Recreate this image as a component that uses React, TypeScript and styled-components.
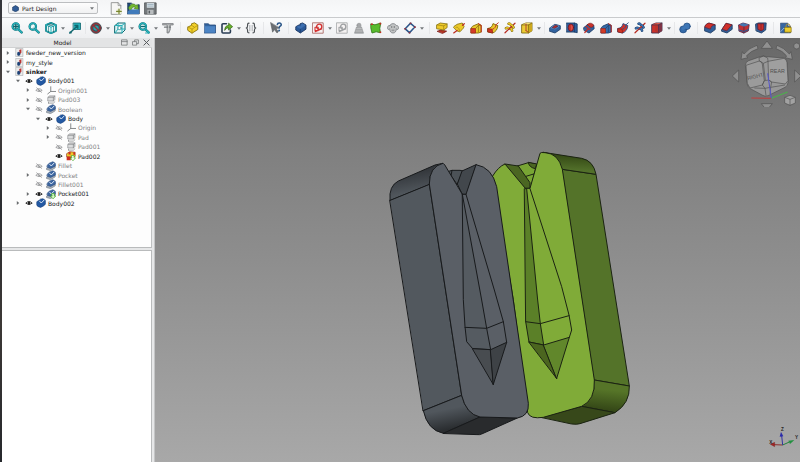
import React from "react";
import styled, { createGlobalStyle } from "styled-components";

const GlobalStyle = createGlobalStyle`
  * { box-sizing: border-box; }
  html, body, #root { height: 100%; }
  body { margin: 0; overflow: hidden; font-family: "DejaVu Sans", sans-serif; font-size: 6px; color: #1f2123; }
  button, select { font: inherit; color: inherit; border: 0; padding: 0; margin: 0; background: none; }
  svg { display: block; }
`;

const Shell = styled.div`
  height: 100vh;
  display: grid;
  grid-template-columns: 2px minmax(0, 1fr);
`;
const DesktopEdge = styled.div`
  background: linear-gradient(#33353a, #4a4340 20%, #2b2d31 45%, #3c3836 70%, #26282c);
`;
const Window = styled.div`
  display: flex;
  flex-direction: column;
  min-height: 0;
  background: #eff0f1;
`;
const TopBar = styled.div`
  display: flex;
  align-items: center;
  height: 18px;
  padding: 0 6px 1px;
  gap: 10px;
  background: linear-gradient(#f4f5f6, #fafbfc);
  border-bottom: 1px solid #c9cbcd;
`;
const WorkbenchBox = styled.label`
  display: flex;
  align-items: center;
  width: 90px;
  height: 12px;
  padding: 0 3px;
  gap: 3px;
  background: linear-gradient(#fdfdfd, #f0f1f2);
  border: 1px solid #bcbec0;
  border-radius: 2px;
`;
const WorkbenchSelect = styled.select`
  appearance: none;
  flex: 1;
  min-width: 0;
  height: 10px;
  outline: 0;
`;
const ToolBar = styled.div`
  display: flex;
  align-items: center;
  height: 20px;
  padding-left: 6px;
  overflow: hidden;
  background: linear-gradient(#fafbfc, #eeeff1);
`;
const ToolButton = styled.button`
  display: flex;
  flex: none;
  align-items: center;
  justify-content: center;
  width: 17px;
  height: 17px;
`;
const CaretButton = styled.button`
  display: flex;
  flex: none;
  align-items: center;
  justify-content: center;
  width: 7px;
  height: 17px;
`;
const Separator = styled.span<{ $wide?: boolean }>`
  flex: none;
  display: flex;
  justify-content: center;
  width: ${(p) => (p.$wide ? 8 : 4)}px;
  height: 12px;
  &::after { content: ""; width: 1px; background: #e6e7e9; }
`;
const FileTools = styled.div`
  display: flex;
`;
const Workspace = styled.div`
  flex: 1;
  min-height: 0;
  display: grid;
  grid-template-columns: 153px minmax(0, 1fr);
`;
const Dock = styled.aside`
  display: flex;
  flex-direction: column;
  min-height: 0;
  padding-right: 2px;
  background: #e6e7e8;
  border-right: 1px solid #c4c5c6;
`;
const DockHeader = styled.header`
  display: flex;
  align-items: center;
  height: 10px;
  background: #e3e4e5;
  border-bottom: 1px solid #d0d1d2;
`;
const DockTitle = styled.h1`
  flex: 1;
  margin: 0;
  padding-left: 4px;
  font-size: 6px;
  line-height: 8px;
  font-weight: 400;
  text-align: center;
`;
const DockButton = styled.button`
  display: flex;
  align-items: center;
  justify-content: center;
  width: 11px;
  height: 9px;
`;
const TreePanel = styled.div`
  flex: none;
  height: 200px;
  background: #fdfdfd;
  border-right: 1px solid #bfc1c2;
  border-bottom: 1px solid #b9bbbc;
`;
const PropertyPanel = styled.div`
  flex: 1;
  min-height: 0;
  margin-top: 2px;
  background: #fff;
  border: 1px solid #b9bbbc;
  border-left: 0;
  border-bottom: 0;
`;
const Tree = styled.ul`
  display: grid;
  grid-auto-rows: 1fr;
  height: 160px;
  margin: 0;
  padding: 0;
  list-style: none;
`;
const Row = styled.li<{ $level: number; $dim?: boolean; $bold?: boolean }>`
  display: flex;
  align-items: center;
  min-height: 0;
  padding-left: ${(p) => p.$level * 10}px;
  line-height: 9px;
  white-space: nowrap;
  color: ${(p) => (p.$dim ? "#7f8183" : "#17191b")};
  font-weight: ${(p) => (p.$bold ? 700 : 400)};
`;
const Cell = styled.span<{ $first?: boolean }>`
  display: flex;
  flex: none;
  align-items: center;
  justify-content: center;
  width: ${(p) => (p.$first ? 11 : 12)}px;
`;
const RowToggle = styled.button`
  display: flex;
  padding: 1px;
`;
const Label = styled.span`
  padding-left: 1px;
`;
const Viewport = styled.main`
  position: relative;
  min-width: 0;
  min-height: 0;
  overflow: hidden;
  background: linear-gradient(#686868, #808080 27%, #929292 60%, #a8a8a8);
`;
const Scene = styled.svg`
  width: 100%;
  height: 100%;
`;
const CubeOverlay = styled.svg`
  position: absolute;
  top: 0;
  right: 0;
`;
const AxisOverlay = styled.svg`
  position: absolute;
  right: 0;
  bottom: 0;
`;

const Ico = ({ children, size = 12 }: { children: React.ReactNode; size?: number }) => (
  <svg width={size} height={size} viewBox="0 0 12 12" strokeLinejoin="round" strokeLinecap="round" aria-hidden="true">
    {children}
  </svg>
);

const TEAL = "#25b2bb";
const TEAL_D = "#0f666e";

const Magnifier = ({ children }: { children?: React.ReactNode }) => (
  <Ico>
    <path d="M7 7 10.6 10.4" stroke={TEAL_D} strokeWidth="2.4" />
    <path d="M7 7 10.6 10.4" stroke={TEAL} strokeWidth="1.6" />
    <circle cx="4.8" cy="4.5" r="3.3" fill="#bfe6e8" stroke={TEAL_D} strokeWidth="2" />
    <circle cx="4.8" cy="4.5" r="3.3" fill="none" stroke={TEAL} strokeWidth="1.3" />
    {children}
  </Ico>
);
const FitAll = () => (
  <Magnifier>
    <path d="M4.8 2.4v4.2M2.7 4.5h4.2" stroke={TEAL_D} strokeWidth="1.3" />
  </Magnifier>
);
const FitSelection = () => (
  <Magnifier>
    <path d="M3.5 5.5 5.6 3.2" stroke="#fff" strokeWidth="1.4" />
  </Magnifier>
);
const ViewZoom = () => (
  <Magnifier>
    <path d="M3 4.5h3.6" stroke={TEAL_D} strokeWidth="1.2" />
    <path d="M7.5 11h3.5" stroke={TEAL} />
  </Magnifier>
);
const IsoView = () => (
  <Ico>
    <path d="M6 .8 11 3v6L6 11.3 1 9V3Z" fill="#e9f7f7" stroke={TEAL_D} strokeWidth="1.7" />
    <path d="M1 3 6 5.200 11 3M6 5.200v6M6 .8 11 3v6L6 11.300 1 9V3Z" fill="none" stroke={TEAL} />
    <path d="M3.500 2 8.500 4.200V10M8.500 2 3.500 4.200V10" fill="none" stroke={TEAL_D} strokeWidth=".6" />
  </Ico>
);
const AlignView = () => (
  <Ico>
    <path d="M4.5 1h7v6.5h-7Z" fill={TEAL} stroke={TEAL_D} strokeWidth=".8" />
    <path d="M.8 11 5 7M3 9 8.5 3.8M6 3.5h2.8v2.8" stroke={TEAL_D} strokeWidth="1.3" fill="none" />
    <path d="M.5 9.6h2.2v1.8H.5Z" fill={TEAL_D} />
  </Ico>
);
const DrawStyle = () => (
  <Ico>
    <circle cx="6" cy="6" r="5.2" fill="#4c5a63" />
    <path d="M3.2 4.2 6 3l3 1.2v3.6L6 9.2 3.2 7.8Z" fill="#2aa2aa" stroke="#274d54" strokeWidth=".8" />
    <circle cx="6" cy="6" r="4.4" fill="none" stroke="#a42b31" strokeWidth="1.3" />
    <path d="m3 3 6 6" stroke="#a42b31" strokeWidth="1.4" />
    <circle cx="6" cy="6" r="5.4" fill="none" stroke="#3a474e" strokeWidth=".8" />
  </Ico>
);
const BoxView = () => (
  <Ico>
    <path d="M1 3.5 4 1h7v7l-3 3H1Z" fill="#dff3f4" stroke={TEAL_D} />
    <path d="M1 3.5h7V11M8 3.5 11 1M4 1v6h7M4 7l-3 4" fill="none" stroke={TEAL} />
    <circle cx="5.5" cy="6" r="1.6" fill="#fff" stroke={TEAL_D} strokeWidth=".5" />
  </Ico>
);
const Measure = () => (
  <Ico>
    <path d="M.8 1.5h10.400v1.500H8.300V7.500L6.800 11H5V3H.8Z" fill="#a9acae" stroke="#75797c" strokeWidth=".7" />
    <path d="M2.500 5.200h6" stroke="#75797c" strokeWidth="1.200" />
    <path d="M6.500 3.500v5" stroke="#dfe0e1" strokeWidth=".6" />
  </Ico>
);
const YellowPart = () => (
  <Ico>
    <path d="M1 5 4.5 3.3V1.8L7.5.8l3.300 2.200v4.500L5 11.200 1 8.500Z" fill="#f2d02a" stroke="#8a730b" strokeWidth=".9" />
    <path d="M1 5 5 7.200l5.800-4M5 7.200v4M4.500 3.300 7 4.800" fill="none" stroke="#b0930f" strokeWidth=".8" />
  </Ico>
);
const Folder = () => (
  <Ico>
    <path d="M.5 1.8h4l1 1.2h6v8H.5Z" fill="#34659f" stroke="#23497b" strokeWidth=".8" />
    <path d="M.8 4.2h10.4v6.5H.8Z" fill="#4c84c4" />
  </Ico>
);
const LinkIcon = () => (
  <Ico>
    <path d="M5.5 1.8H2A1 1 0 0 0 1 2.8V10a1 1 0 0 0 1 1h6.4a1 1 0 0 0 1-1V8" fill="none" stroke="#2a3d54" strokeWidth="1.6" />
    <path d="M3.800 8c0-3 1.200-4.400 3.800-4.500V1.200l4 3.500-4 3.300V5.900C6 5.900 4.800 6.500 3.800 8Z" fill="#69b22b" stroke="#2d5c10" strokeWidth=".7" />
  </Ico>
);
const Expression = () => (
  <Ico>
    <path d="M4 1.2C2.5 1.2 2.6 2 2.6 3.4 2.6 5 2.3 5.8 1.2 6c1.1.2 1.4 1 1.4 2.6 0 1.4-.1 2.2 1.4 2.2M8 1.2c1.5 0 1.4.8 1.4 2.2 0 1.6.3 2.4 1.4 2.6-1.1.2-1.4 1-1.4 2.6 0 1.4.1 2.2-1.4 2.2" fill="none" stroke="#4b5054" strokeWidth="1.2" />
    <path d="M4.8 3.4v5.4M7.2 3.4v5.4" stroke="#7b8084" strokeWidth=".6" />
  </Ico>
);
const WhatsThis = () => (
  <Ico>
    <path d="m.6.8 2 9.4 1.8-2.6 2.6 3.4 1.4-1.2-2.3-3.2 3.1-.6Z" fill="#6b6f73" stroke="#4b4f53" strokeWidth=".5" />
    <path d="M7.4 2.4C7.6.4 11.4.5 11.2 2.8 11 4.4 9.2 4 9.1 6" fill="none" stroke="#2c5788" strokeWidth="1.6" />
    <circle cx="9.1" cy="8.6" r="1" fill="#2c5788" />
  </Ico>
);
const BodyIcon = () => (
  <Ico>
    <path d="M1 4.6 4.2 2.8 5 3.4V1.800L7.600.9 11 3v4.200L5.400 11 1 8.200Z" fill="#2b5997" stroke="#14305c" strokeWidth=".8" />
    <path d="M1.4 4.8 5.3 7l5.300-3.700L7.600 1.600 5.600 2.400v2.200L4.100 3.500Z" fill="#3d6fb0" />
    <path d="M5.300 7.200v3.500" stroke="#14305c" strokeWidth=".6" />
  </Ico>
);
const Sketch = ({ color = "#d33131", frame = "#ab6b68" }: { color?: string; frame?: string }) => (
  <Ico>
    <path d="M.8.8h10.4v10.4H.8Z" fill="#f5f2f2" stroke={frame} strokeWidth=".9" />
    <circle cx="7.2" cy="4.8" r="2.6" fill="none" stroke={color} strokeWidth="1.3" />
    <path d="M3 5.2h3.2v3.4H3ZM3.2 9.8 9.4 7" fill="none" stroke={color} strokeWidth="1.1" />
  </Ico>
);
const Weight = () => (
  <Ico>
    <path d="M4 3.2a2 2 0 1 1 4 0c0 1-.4 1.2-.5 1.8h1l2 6.2h-9l2-6.2h1C4.4 4.4 4 4.2 4 3.2Z" fill="#a6a8aa" stroke="#8c8f91" strokeWidth=".6" />
    <path d="M3.8 6.5h4.6M3 9h6" stroke="#c4c6c7" strokeWidth=".7" />
  </Ico>
);
const GreenShape = () => (
  <Ico>
    <path d="m1 2 4 .8L10.8 1 9.8 6.4l.6 4.4-4.2-1L2 11 .9 6.4Z" fill="#58bb2d" stroke="#2c7414" strokeWidth=".8" />
    <path d="M1 1.5h1.8v1.6H1ZM9.4.8h1.8v1.7H9.4ZM9.600 9.400h1.600V11H9.600Z" fill="#c62a20" />
  </Ico>
);
const Clone = () => (
  <Ico>
    <path d="M2.800 3.500C4 1 8 1 9.200 3.500c2-.2 2.600 1.500 2.200 3.200-.3 1-1.500 1-2 0C9.200 9.500 8 11 6 11S2.800 9.500 2.600 6.700c-.5 1-1.700 1-2 0-.4-1.700.2-3.400 2.200-3.200Z" fill="#c2c4c5" stroke="#85888b" strokeWidth=".9" />
    <circle cx="4.700" cy="5" r=".7" fill="#66696b" />
    <circle cx="7.300" cy="5" r=".7" fill="#66696b" />
    <path d="M5 8.200h2" stroke="#77797b" strokeWidth=".8" />
  </Ico>
);
const Datum = () => (
  <Ico>
    <path d="M6.500 1.300 10.800 5 5.500 10.700 1.200 6.800Z" fill="#f5f7f9" stroke="#2d568a" strokeWidth="1.600" />
    <path d="M5.700.4h1.700v1.700H5.700ZM10 4.200h1.700v1.700H10ZM4.700 9.900h1.700v1.700H4.700ZM.3 5.900H2v1.700H.3Z" fill="#8c3140" />
  </Ico>
);
const PadTool = () => (
  <Ico>
    <path d="M1.5 9.2 5 8l5.6 1.2-3.800 2.100Z" fill="#b43424" stroke="#7b1712" strokeWidth=".8" />
    <path d="M.9 2.9 4.2 1l6.900.9v3.700L7.700 8 .9 6.800Z" fill="#edc92a" stroke="#84700d" strokeWidth=".8" />
    <path d="m.9 2.9 6.800 1 3.400-2M7.700 3.9V8" fill="none" stroke="#9d8410" strokeWidth=".7" />
  </Ico>
);
const RevolveTool = () => (
  <Ico>
    <path d="M.6 5.2C1 3.500 3 3.600 4 2.300L9.200 1l1.900 3.300C10.500 7 8 8.500 6.800 9.800L4.200 9Z" fill="#ecc92a" stroke="#84700d" strokeWidth=".8" />
    <path d="M2.800 5.500c1.600-1 3.200 0 3.800 3.500" fill="none" stroke="#a58b13" strokeWidth=".7" />
    <path d="M.7 10.900 4 8.400M9.500 3.300 11.300 1.700" stroke="#bd2b21" strokeWidth="1.200" />
  </Ico>
);
const LoftTool = ({ a, b }: { a: string; b: string }) => (
  <Ico>
    <path d="M3 4 8.400 1.700l2.800 1.700V10l-2.900 1H1.100V6.600Z" fill={a} stroke={b} strokeWidth=".9" />
    <path d="M1.100 6.600h4.400V11H1.100Z" fill="#d43c27" stroke="#a02117" strokeWidth=".7" />
    <path d="m5.500 6.600 2.900-3.200h2.700M8.400 3.400V10" fill="none" stroke={b} strokeWidth=".7" />
    <path d="m8.400 1.700 2.800 1.700V10" fill="none" stroke="#c32a20" />
  </Ico>
);
const SweepTool = ({ a, b, line }: { a: string; b: string; line: string }) => (
  <Ico>
    <path d="M1 6.500C4.300 6 5.300 4.300 6 1.600l4.800 2C10.600 7.500 8.500 10 5.600 11L1 10Z" fill={a} stroke={b} strokeWidth=".9" />
    <path d="m1 6.600 4.200.7.400 3.700L1 10Z" fill="#cf3526" stroke="#8f1b14" strokeWidth=".7" />
    <path d="M5.600 7.200C8 6.500 8.700 4.500 9 2.800L11.300.8" fill="none" stroke={line} strokeWidth=".9" />
  </Ico>
);
const HelixTool = ({ a, b }: { a: string; b: string }) => (
  <Ico>
    <path d="M1 10.800 11 1.200" stroke="#b72a20" strokeWidth="1.200" />
    <path d="M4.600 1.700C7 1.200 6.400 3.600 8.500 3.800L9.500 5.400M2 6.300C4 4.700 4.300 7 7.300 6.600l.7 2" fill="none" stroke={b} strokeWidth="2.600" />
    <path d="M4.600 1.700C7 1.200 6.400 3.600 8.500 3.800L9.500 5.400M2 6.300C4 4.700 4.300 7 7.300 6.600l.7 2" fill="none" stroke={a} strokeWidth="1.600" />
    <path d="M4.600 7.400 7.600 4.500" stroke="#b72a20" strokeWidth="1.100" />
  </Ico>
);
const CubeTool = ({ front, top, side, edge }: { front: string; top: string; side: string; edge: string }) => (
  <Ico>
    <path d="M1 2.600 5 1h6v7.800L7.400 11H1Z" fill={front} stroke={edge} strokeWidth=".9" />
    <path d="M1 2.800 4.800 1H11L7.400 2.900Z" fill={top} />
    <path d="M7.400 2.900 11 1v7.800L7.400 11Z" fill={side} />
    <path d="M1 2.900h6.400L11 1M7.400 2.900V11" fill="none" stroke={edge} strokeWidth=".8" />
    <path d="M5 2v6.700M5 8.700 7 10" stroke="#a9352b" strokeWidth=".9" />
  </Ico>
);
const PocketTool = () => (
  <Ico>
    <path d="M.7 6 5.800 2.300l5.500 1.400v3.600L6 11 .7 9.300Z" fill="#31629f" stroke="#183962" strokeWidth=".8" />
    <path d="M.9 6 5.800 2.500l5.300 1.300L6 7.600Z" fill="#5b8ac0" />
    <path d="m3.600 5.400 2.600-2 2.700.7-2.700 2Z" fill="#bd2d28" stroke="#6b1a2a" strokeWidth=".7" />
  </Ico>
);
const HoleTool = () => (
  <Ico>
    <path d="M.6 1h7.800l2.800.9v8.800l-3-.6H.6Z" fill="#2f5f9d" stroke="#173760" strokeWidth=".8" />
    <path d="M8.400 1v9.100" stroke="#173760" strokeWidth=".7" />
    <ellipse cx="4.900" cy="5.600" rx="2.700" ry="3.600" fill="#c32e29" stroke="#63172a" strokeWidth=".8" />
    <path d="M4.800 2.500c2.600 1 2.600 5 0 6.300Z" fill="#dc5248" />
  </Ico>
);
const GrooveTool = () => (
  <Ico>
    <path d="M.8 5.500 4.800 2.600l5.900.7.500 3.400L6 11 1.300 8.600Z" fill="#31629f" stroke="#183962" strokeWidth=".8" />
    <path d="M4.400 2.500C6.500.2 9.700 1 10.700 3.400 9 6.500 6.600 5.800 4.400 2.500Z" fill="#ca332c" stroke="#74191e" strokeWidth=".6" />
    <path d="M1.800 10.500 5 7M3 4.600l4 3" stroke="#c22d28" strokeWidth="1.200" />
  </Ico>
);
const Blob = () => (
  <Ico>
    <circle cx="4.200" cy="7.400" r="3.500" fill="#356ba9" stroke="#20497c" strokeWidth=".7" />
    <circle cx="8" cy="4.300" r="3.300" fill="#3e76b5" stroke="#20497c" strokeWidth=".7" />
    <path d="M4 6.500 7.500 4" stroke="#3e76b5" strokeWidth="3" />
  </Ico>
);
const DressTool = ({ kind }: { kind: "fillet" | "chamfer" | "draft" | "thick" }) => (
  <Ico>
    {kind === "fillet" && (
      <>
        <path d="M.8 4.800C1.500 2.500 3 1.500 5 1.100l6.200 1.700v4.800L6.500 11 .8 9Z" fill="#315f99" stroke="#17355c" strokeWidth=".8" />
        <path d="M.8 5C1.300 2.700 3 1.500 5 1.100l6.200 1.700C8.300 3 7 4.600 6.500 6.800Z" fill="#cf302b" stroke="#7b1820" strokeWidth=".6" />
      </>
    )}
    {kind === "chamfer" && (
      <>
        <path d="M.8 7.500 5 1.300l6.200 1.500v4.500L6 11 .8 9.300Z" fill="#315f99" stroke="#17355c" strokeWidth=".8" />
        <path d="M1.300 7 5 1.300l5.800 1.500L6 8.600Z" fill="#cf302b" stroke="#7b1820" strokeWidth=".6" />
      </>
    )}
    {kind === "draft" && (
      <>
        <path d="M.8 2.800 5 1l6.200 1.700L10.300 9 5.800 11 1.300 9.300Z" fill="#bd3034" stroke="#512243" strokeWidth=".8" />
        <path d="M.8 2.800 5 1l6.200 1.700L6 4.800Z" fill="#4577b2" />
        <path d="M6 4.800 5.800 11" stroke="#512243" strokeWidth=".7" />
        <path d="m1.200 8 4.700 1.500 4.600-2" fill="none" stroke="#2b5791" strokeWidth="1.200" />
      </>
    )}
    {kind === "thick" && (
      <>
        <path d="M.8 2 3.500.9h7.700L10.700 8 6.400 11 1.300 9Z" fill="#315f99" stroke="#17355c" strokeWidth=".8" />
        <path d="M3 1.800h5.800v5.600L6.200 8.800l-3-1.300Z" fill="#c9302c" stroke="#66182b" strokeWidth=".7" />
        <path d="M6 2.300v6" stroke="#7d1b26" strokeWidth=".7" />
      </>
    )}
  </Ico>
);
const LockTool = () => (
  <Ico>
    <path d="M.8 1.200h7v3h2.700v6.600H.8Z" fill="#3666a2" stroke="#1c3e6b" strokeWidth=".7" />
    <path d="M.8 9.500 4 6l4 4" fill="none" stroke="#8fb2d6" />
    <path d="M6 5.600V4a2 2 0 0 1 4 0v1.600" fill="none" stroke="#a79141" />
    <path d="M5 5.400h6.200v4.800H5Z" fill="#edcd2c" stroke="#8b750f" strokeWidth=".7" />
  </Ico>
);
const NewFile = () => (
  <Ico size={13}>
    <path d="M1.500.6h6L10 3.300v8.100H1.500Z" fill="#f6f6f4" stroke="#8b8d8c" strokeWidth=".8" />
    <path d="M7.500.6v2.700H10" fill="none" stroke="#8b8d8c" strokeWidth=".7" />
    <circle cx="8.300" cy="8.700" r="2.600" fill="#edf0d9" />
    <path d="M8.300 6.500v4.300M6.100 8.700h4.300" stroke="#78862f" strokeWidth="1.100" />
  </Ico>
);
const OpenFile = () => (
  <Ico size={13}>
    <path d="M.5 1h3.800l1 1.500h6V11H.5Z" fill="#1f4677" stroke="#173353" strokeWidth=".7" />
    <path d="M3.500 1.500h6.700v6H2Z" fill="#dbe7ee" />
    <path d="M1.200 5.500C3 1.500 6.500 1 8 3l2-.5.600 4.400-4-.7 1-1.200C5.500 3.500 4 6 3.500 8.200Z" fill="#74b933" stroke="#376b15" strokeWidth=".5" />
    <path d="M.8 8.500 3.500 7h7.800v4H.5Z" fill="#407bbb" />
  </Ico>
);
const SaveFile = () => (
  <Ico size={13}>
    <path d="M.8.8h10.400v10.400H.8Z" fill="#73787b" stroke="#54595c" strokeWidth=".8" />
    <path d="M2.600 1h6.800v4.300H2.600Z" fill="#d7e1e6" />
    <path d="M3.500 2.300h5M3.500 3.800h5" stroke="#89a1ae" strokeWidth=".6" />
    <path d="M3.200 7.200h5.600v4H3.200Z" fill="#b9bdbf" />
    <path d="M4.200 8h1.400v2.600H4.200Z" fill="#545a5e" />
  </Ico>
);
const Caret = () => (
  <svg width="4" height="3" viewBox="0 0 4 3" aria-hidden="true">
    <path d="M0 .3h4L2 2.700Z" fill="#74787b" />
  </svg>
);

type Item = "|" | "||" | { name: string; icon: React.ReactNode; menu?: boolean };
const YELLOW = { a: "#e9c62b", b: "#826c0b" };
const BLUE = { a: "#3d70ad", b: "#1c426f" };
const tools: Item[] = [
  { name: "Fit all", icon: <FitAll /> },
  { name: "Fit selection", icon: <FitSelection /> },
  { name: "Isometric", icon: <IsoView />, menu: true },
  { name: "Align to selection", icon: <AlignView /> },
  "|",
  { name: "Draw style", icon: <DrawStyle />, menu: true },
  { name: "Bounding box", icon: <BoxView />, menu: true },
  { name: "Zoom", icon: <ViewZoom />, menu: true },
  { name: "Measure", icon: <Measure /> },
  "||",
  { name: "Create part", icon: <YellowPart /> },
  { name: "Create group", icon: <Folder /> },
  { name: "Make link", icon: <LinkIcon />, menu: true },
  { name: "Variable set", icon: <Expression /> },
  "||",
  { name: "What's this", icon: <WhatsThis /> },
  "||",
  { name: "Create body", icon: <BodyIcon /> },
  { name: "Create sketch", icon: <Sketch />, menu: true },
  { name: "Edit sketch", icon: <Sketch color="#9da0a2" frame="#a9abad" /> },
  { name: "Validate sketch", icon: <Weight /> },
  { name: "Shape binder", icon: <GreenShape /> },
  { name: "Clone", icon: <Clone /> },
  { name: "Datum", icon: <Datum />, menu: true },
  "||",
  { name: "Pad", icon: <PadTool /> },
  { name: "Revolution", icon: <RevolveTool /> },
  { name: "Additive loft", icon: <LoftTool {...YELLOW} /> },
  { name: "Additive pipe", icon: <SweepTool {...YELLOW} line="#c32a20" /> },
  { name: "Additive helix", icon: <HelixTool {...YELLOW} /> },
  { name: "Additive box", icon: <CubeTool front="#eccb36" top="#f6e17a" side="#cda81d" edge="#806b0d" />, menu: true },
  "|",
  { name: "Pocket", icon: <PocketTool /> },
  { name: "Hole", icon: <HoleTool /> },
  { name: "Groove", icon: <GrooveTool /> },
  { name: "Subtractive loft", icon: <LoftTool a="#376aa7" b="#1c426f" /> },
  { name: "Subtractive pipe", icon: <SweepTool a="#cc322c" b="#2c5488" line="#2c5488" /> },
  { name: "Subtractive helix", icon: <HelixTool {...BLUE} /> },
  { name: "Subtractive box", icon: <CubeTool front="#ca322c" top="#db5d51" side="#7e3346" edge="#44324c" />, menu: true },
  "|",
  { name: "Boolean operation", icon: <Blob /> },
  "||",
  { name: "Fillet", icon: <DressTool kind="fillet" /> },
  { name: "Chamfer", icon: <DressTool kind="chamfer" /> },
  { name: "Draft", icon: <DressTool kind="draft" /> },
  { name: "Thickness", icon: <DressTool kind="thick" /> },
  "||",
  { name: "Migrate", icon: <LockTool /> },
];

type Kind = "doc" | "body" | "origin" | "pad" | "tip" | "feature" | "pocket";
const TreeIcon = ({ kind }: { kind: Kind }) => {
  switch (kind) {
    case "doc":
      return (
        <Ico size={9}>
          <path d="M1.500.5h9v11h-9Z" fill="#ececec" stroke="#a5a7a9" strokeWidth=".8" />
          <path d="m3 6 3-1.500 1.500 3.500L5.500 10.500 3 9.500Z" fill="#1e4377" />
          <path d="M5.500 2.500 8.500 1.800v4.500L6.800 7.500Z" fill="#b93533" />
        </Ico>
      );
    case "origin":
      return (
        <Ico size={9}>
          <path d="M5 1v6.300L1 10.500M5 7.300h6.500" fill="none" stroke="#707375" strokeWidth="1.100" />
        </Ico>
      );
    case "pad":
      return (
        <Ico size={9}>
          <path d="M1.500 3 3.500 1.200h7V6L8.500 8h-7Z" fill="#dbdcdd" stroke="#85888a" strokeWidth=".9" />
          <path d="M1.500 3h7l2-1.800M8.500 3v5M2 10.800h6.500L10.500 9M2 9.600v1.200" fill="none" stroke="#85888a" />
        </Ico>
      );
    case "tip":
      return (
        <Ico size={10}>
          <path d="M1 3 4.500.8 11 1.500v5L8 8 1 7Z" fill="#efc82b" stroke="#94391a" strokeWidth=".8" />
          <path d="M.8 6.500h5v4.700h-5ZM3 1.200h2.500v3H3ZM8.800 1.500h2v3h-2Z" fill="#cc2d22" />
          <path d="M6.700 5.500h3v3h1.800l-3.300 3.200L5 8.500h1.700Z" fill="#f4fff0" stroke="#40a824" strokeWidth=".8" />
        </Ico>
      );
    default:
      return (
        <Ico size={10}>
          {kind === "body" ? (
            <path d="M.9 4.500Q1 3.800 4 2.600 4.500 1 8 .9q3 .6 3.300 2.300v4Q11 9 5.600 11.300 1 10.500.9 8.500Z" fill="#2359a3" stroke="#18407a" strokeWidth=".7" />
          ) : (
            <>
              <path d="M1 8.500 4 7l7-1v2.200L5.500 11.500 1 10.300Z" fill="#a9b1bb" stroke="#6d7784" strokeWidth=".8" />
              <path d="M1.500 5 4 2.600 8 .9q3 .6 3.300 2.300V6L5.500 9 1.500 7.500Z" fill="#3b65a0" stroke="#2c4d7e" strokeWidth=".7" />
            </>
          )}
          <path d="m4.500 4 1.800 2 3.500-3.600" fill="none" stroke="#dfe9f5" strokeWidth="1.200" />
          {kind === "pocket" && (
            <path d="M7 5.500h3v3h1.600l-3.100 3.300-3.200-3.300H7Z" fill="#dff9d4" stroke="#43ad24" strokeWidth=".9" />
          )}
        </Ico>
      );
  }
};
const Eye = ({ open }: { open: boolean }) => (
  <svg width="8" height="6" viewBox="0 0 8 6" aria-hidden="true">
    {open ? (
      <>
        <path d="M.8 3.200Q4-.2 7.200 3.200 4 6.200.8 3.200Z" fill="#fff" stroke="#222" strokeWidth=".9" />
        <circle cx="4" cy="3" r="1.300" fill="#222" />
      </>
    ) : (
      <path d="M.8 3.400Q4 0 7.200 3.400 4 6 .8 3.400ZM1.400.6 6.800 5.600M3 3.300h2" fill="none" stroke="#8f9193" strokeWidth=".8" />
    )}
  </svg>
);
const Arrow = ({ open }: { open: boolean }) => (
  <svg width="4" height="4" viewBox="0 0 4 4" aria-hidden="true">
    <path d={open ? "M0 .8h4L2 3.200Z" : "M.8 0v4L3.200 2Z"} fill="#6a6d6f" />
  </svg>
);

type Node = { label: string; level: number; kind: Kind; arrow?: "open" | "closed"; hidden?: boolean; bold?: boolean };
const nodes: Node[] = [
  { label: "feeder_new_version", level: 0, kind: "doc", arrow: "closed" },
  { label: "my_style", level: 0, kind: "doc", arrow: "closed" },
  { label: "sinker", level: 0, kind: "doc", arrow: "open", bold: true },
  { label: "Body001", level: 1, kind: "body", arrow: "open" },
  { label: "Origin001", level: 2, kind: "origin", arrow: "closed", hidden: true },
  { label: "Pad003", level: 2, kind: "pad", arrow: "closed", hidden: true },
  { label: "Boolean", level: 2, kind: "feature", arrow: "open", hidden: true },
  { label: "Body", level: 3, kind: "body", arrow: "open" },
  { label: "Origin", level: 4, kind: "origin", arrow: "closed", hidden: true },
  { label: "Pad", level: 4, kind: "pad", arrow: "closed", hidden: true },
  { label: "Pad001", level: 4, kind: "pad", hidden: true },
  { label: "Pad002", level: 4, kind: "tip" },
  { label: "Fillet", level: 2, kind: "feature", hidden: true },
  { label: "Pocket", level: 2, kind: "feature", arrow: "closed", hidden: true },
  { label: "Fillet001", level: 2, kind: "feature", hidden: true },
  { label: "Pocket001", level: 2, kind: "pocket", arrow: "closed" },
  { label: "Body002", level: 1, kind: "body", arrow: "closed" },
];

const Model = () => (
  <Scene viewBox="-675 -306 1935 1272" preserveAspectRatio="xMidYMid slice" role="img" aria-label="Sinker mould halves">
    <defs>
      <linearGradient id="greyTop" x1="0" y1="0" x2=".25" y2="1">
        <stop offset=".2" stopColor="#2d3034" />
        <stop offset=".85" stopColor="#50565c" />
      </linearGradient>
      <linearGradient id="greyFoot" x1=".35" y1="0" x2=".65" y2="1">
        <stop offset=".35" stopColor="#51575d" />
        <stop offset=".85" stopColor="#2a2d30" />
      </linearGradient>
      <linearGradient id="greenTop" x1=".55" y1="0" x2=".45" y2="1">
        <stop offset=".1" stopColor="#334714" />
        <stop offset=".8" stopColor="#52702a" />
      </linearGradient>
      <linearGradient id="greenFoot" x1=".6" y1="0" x2=".45" y2="1">
        <stop offset=".3" stopColor="#567528" />
        <stop offset=".9" stopColor="#354817" />
      </linearGradient>
    </defs>
    <g stroke="#1b2312" strokeWidth="3" strokeLinejoin="round" strokeLinecap="round">
      <path d="M547 88 648 103 748 738 643 720Z" fill="#547329" />
      <path d="M490 37 605 55Q640 62 648 103L547 88Q530 42 490 37Z" fill="url(#greenTop)" />
      <path d="M643 720 748 738Q750 790 705 818L605 799Q645 780 643 720Z" fill="url(#greenFoot)" />
      <path d="M484 832 605 799 705 818 600 851Q590 854 575 852Z" fill="#37481a" />
      <path d="M412 78 445 68 470 73 452 145 436 145Z" fill="#78a534" />
      <path d="M445 68Q447 82 466 86L470 73Z" fill="#4b6622" />
      <path d="M438 109 461 102" />
      <path d="M375 72 415 78 450 128 450 145 436 145Z" fill="#4b6622" />
      <path d="M338 108Q355 80 375 72L436 145H450L480 40Q482 36 495 38 535 40 547 88L643 720Q646 780 605 799L490 832Q450 838 443 818L400 480Z" fill="#80ab38" />
      <path d="M434 146 440 146 473 480 481 551 491 615 447 606 437 545Z" fill="#5b8028" />
      <path d="M447 606 491 615 530 715Z" fill="#4b651f" />
      <path d="M491 615 568 592 530 715Z" fill="#61872b" />
      <path d="M450 146 545 440 567 525 575 570 568 592M437 545 481 551 567 527" fill="none" />
    </g>
    <g stroke="#181a1c" strokeWidth="3" strokeLinejoin="round" strokeLinecap="round">
      <path d="M30 180 148 132 245 766 130 812Z" fill="#52585e" />
      <path d="M30 180Q26 138 55 123L165 75 188 70Q148 80 148 132Z" fill="url(#greyTop)" />
      <path d="M130 812 245 766Q258 820 300 831L190 880Q142 870 130 812Z" fill="url(#greyFoot)" />
      <path d="M190 880 300 831 412 834 305 882Q299 885 292 884Z" fill="#292b2d" />
      <path d="M206 94 216 91 240 91 250 93 232 132Z" fill="#4c5257" />
      <path d="M216 91 213 108" fill="none" />
      <path d="M288 74 246 93 232 132 247 163 258 163Z" fill="#42474c" />
      <path d="M188 70Q148 80 148 132L245 766Q258 822 300 831L412 834Q448 828 445 790L350 140Q336 82 288 74L258 163H247L195 76Z" fill="#5a5f66" />
      <path d="M247 163 305 480 320 565 332 629 278 626 260 605 255 560 250 480Z" fill="#555b61" />
      <path d="M278 626 332 629 340 733Z" fill="#484c50" />
      <path d="M332 629 380 607 340 733Z" fill="#3e4246" />
      <path d="M258 163 343 450 370 545 380 607M255 562 320 565 370 545" fill="none" />
    </g>
  </Scene>
);

const NavCube = () => (
  <CubeOverlay width="70" height="69" viewBox="90 6 210 207" role="img" aria-label="Navigation cube">
    <g fill="#909090" stroke="#505050" strokeWidth="2" strokeLinejoin="round">
      <path d="M201 15 217 37H184Z" />
      <path d="M97 120 116 102V138Z" />
      <path d="M184 203H217L200 223Z" />
      <path d="M284 102V138L303 120Z" />
      <path d="M123 70 127 47 132 54Q148 35 171 28L174 38Q153 44 139 60L144 65Z" />
      <path d="M277 70 273 47 268 54Q252 35 231 28L228 38Q248 44 260 60L255 65Z" />
      <circle cx="290" cy="30" r="9" />
      <path d="M254 184 270 178 286 184V201L270 208 254 201Z" fill="#a2a2a2" />
      <path d="M254 184 270 190 286 184M270 190V208" fill="none" />
    </g>
    <g fill="#989898" stroke="#505050" strokeWidth="2" strokeLinejoin="round">
      <path d="M136 88Q136 78 146 74L181 62Q190 58 200 62L250 66Q262 68 262 80L264 140Q263 150 255 154L204 179Q196 183 188 178L151 158Q143 153 142 145Z" />
      <path d="M138 88 178 75Q186 76 187 84L193 134 187 147 150 156 142 142Z" fill="#9b9b9b" />
      <path d="M204 76 252 67Q260 70 261 80L264 134 256 144 215 138 206 132Z" fill="#9f9f9f" />
      <path d="M178 75 177 66 190 60 203 66 204 76 190 82ZM190 82 196 132M193 134 206 132 215 138 212 154 195 157 187 147ZM195 157 163 156M212 154 255 147M195 157 198 179M212 154 210 174" fill="none" />
    </g>
    <g fontFamily="Liberation Sans, sans-serif" fontSize="16" fill="#505050">
      <text x="143" y="133" transform="rotate(-15 143 133)">RIGHT</text>
      <text x="210" y="112">REAR</text>
    </g>
    <g strokeWidth="3" fill="none">
      <path d="M154 186 214 187" stroke="#c43d3d" />
      <path d="M214 187 263 168" stroke="#47b847" />
      <path d="M214 187 203 112" stroke="#5555cd" />
    </g>
  </CubeOverlay>
);

const AxisCross = () => (
  <AxisOverlay width="40" height="40" viewBox="60 21 120 120" role="img" aria-label="Axis cross">
    <g strokeWidth="3" fill="none">
      <path d="M128 90 102 89" stroke="#8c3030" />
      <path d="M128 90 148 81" stroke="#23823b" />
      <path d="M128 90 125 62" stroke="#3333a0" />
    </g>
    <path d="M91 88 104 82V95Z" fill="#a32525" stroke="#6c1d1d" />
    <path d="M163 75 150 87 145 77Z" fill="#229040" />
    <path d="M123 51 130 64 119 65Z" fill="#2b2bab" />
    <g fontFamily="Liberation Sans, sans-serif" fontSize="14" fontWeight="700" fill="#252525">
      <text x="88" y="87">X</text>
      <text x="165" y="73">Y</text>
      <text x="123" y="47">Z</text>
    </g>
  </AxisOverlay>
);

export default function App() {
  return (
    <Shell>
      <GlobalStyle />
      <DesktopEdge />
      <Window>
        <TopBar>
          <WorkbenchBox>
            <Ico size={7}>
              <path d="M1 4 6 1l5 3v5l-5 2.500L1 9Z" fill="#315d98" stroke="#18365f" strokeWidth="1.200" />
            </Ico>
            <WorkbenchSelect aria-label="Workbench" defaultValue="Part Design">
              <option>Part Design</option>
            </WorkbenchSelect>
            <Caret />
          </WorkbenchBox>
          <FileTools>
            <ToolButton aria-label="New"><NewFile /></ToolButton>
            <ToolButton aria-label="Open"><OpenFile /></ToolButton>
            <ToolButton aria-label="Save"><SaveFile /></ToolButton>
          </FileTools>
        </TopBar>
        <ToolBar role="toolbar">
          {tools.map((t, i) =>
            typeof t === "string" ? (
              <Separator key={i} $wide={t === "||"} />
            ) : (
              <React.Fragment key={i}>
                <ToolButton aria-label={t.name}>{t.icon}</ToolButton>
                {t.menu && <CaretButton aria-label={`${t.name} menu`}><Caret /></CaretButton>}
              </React.Fragment>
            )
          )}
        </ToolBar>
        <Workspace>
          <Dock>
            <DockHeader>
              <DockTitle>Model</DockTitle>
              <DockButton aria-label="Minimise">
                <Ico size={7}><path d="M1.500 1.500h9v9h-9ZM1.500 4.500h9" fill="none" stroke="#686b6d" strokeWidth="1.200" /></Ico>
              </DockButton>
              <DockButton aria-label="Float">
                <Ico size={7}><path d="M1.500 4.500H8v6H1.500ZM4.500 4V1.500H11V8H8.500" fill="none" stroke="#686b6d" strokeWidth="1.200" /></Ico>
              </DockButton>
              <DockButton aria-label="Close">
                <Ico size={7}><path d="m1.500 1.500 9 9M10.500 1.500l-9 9" stroke="#4f5254" strokeWidth="1.600" /></Ico>
              </DockButton>
            </DockHeader>
            <TreePanel>
              <Tree role="tree">
                {nodes.map((n) => (
                  <Row key={n.label} role="treeitem" $level={n.level} $dim={n.hidden} $bold={n.bold}>
                    <Cell $first>
                      {n.arrow && (
                        <RowToggle aria-label={`Toggle ${n.label}`}><Arrow open={n.arrow === "open"} /></RowToggle>
                      )}
                    </Cell>
                    {n.level > 0 && <Cell><Eye open={!n.hidden} /></Cell>}
                    <Cell><TreeIcon kind={n.kind} /></Cell>
                    <Label>{n.label}</Label>
                  </Row>
                ))}
              </Tree>
            </TreePanel>
            <PropertyPanel />
          </Dock>
          <Viewport>
            <Model />
            <NavCube />
            <AxisCross />
          </Viewport>
        </Workspace>
      </Window>
    </Shell>
  );
}
